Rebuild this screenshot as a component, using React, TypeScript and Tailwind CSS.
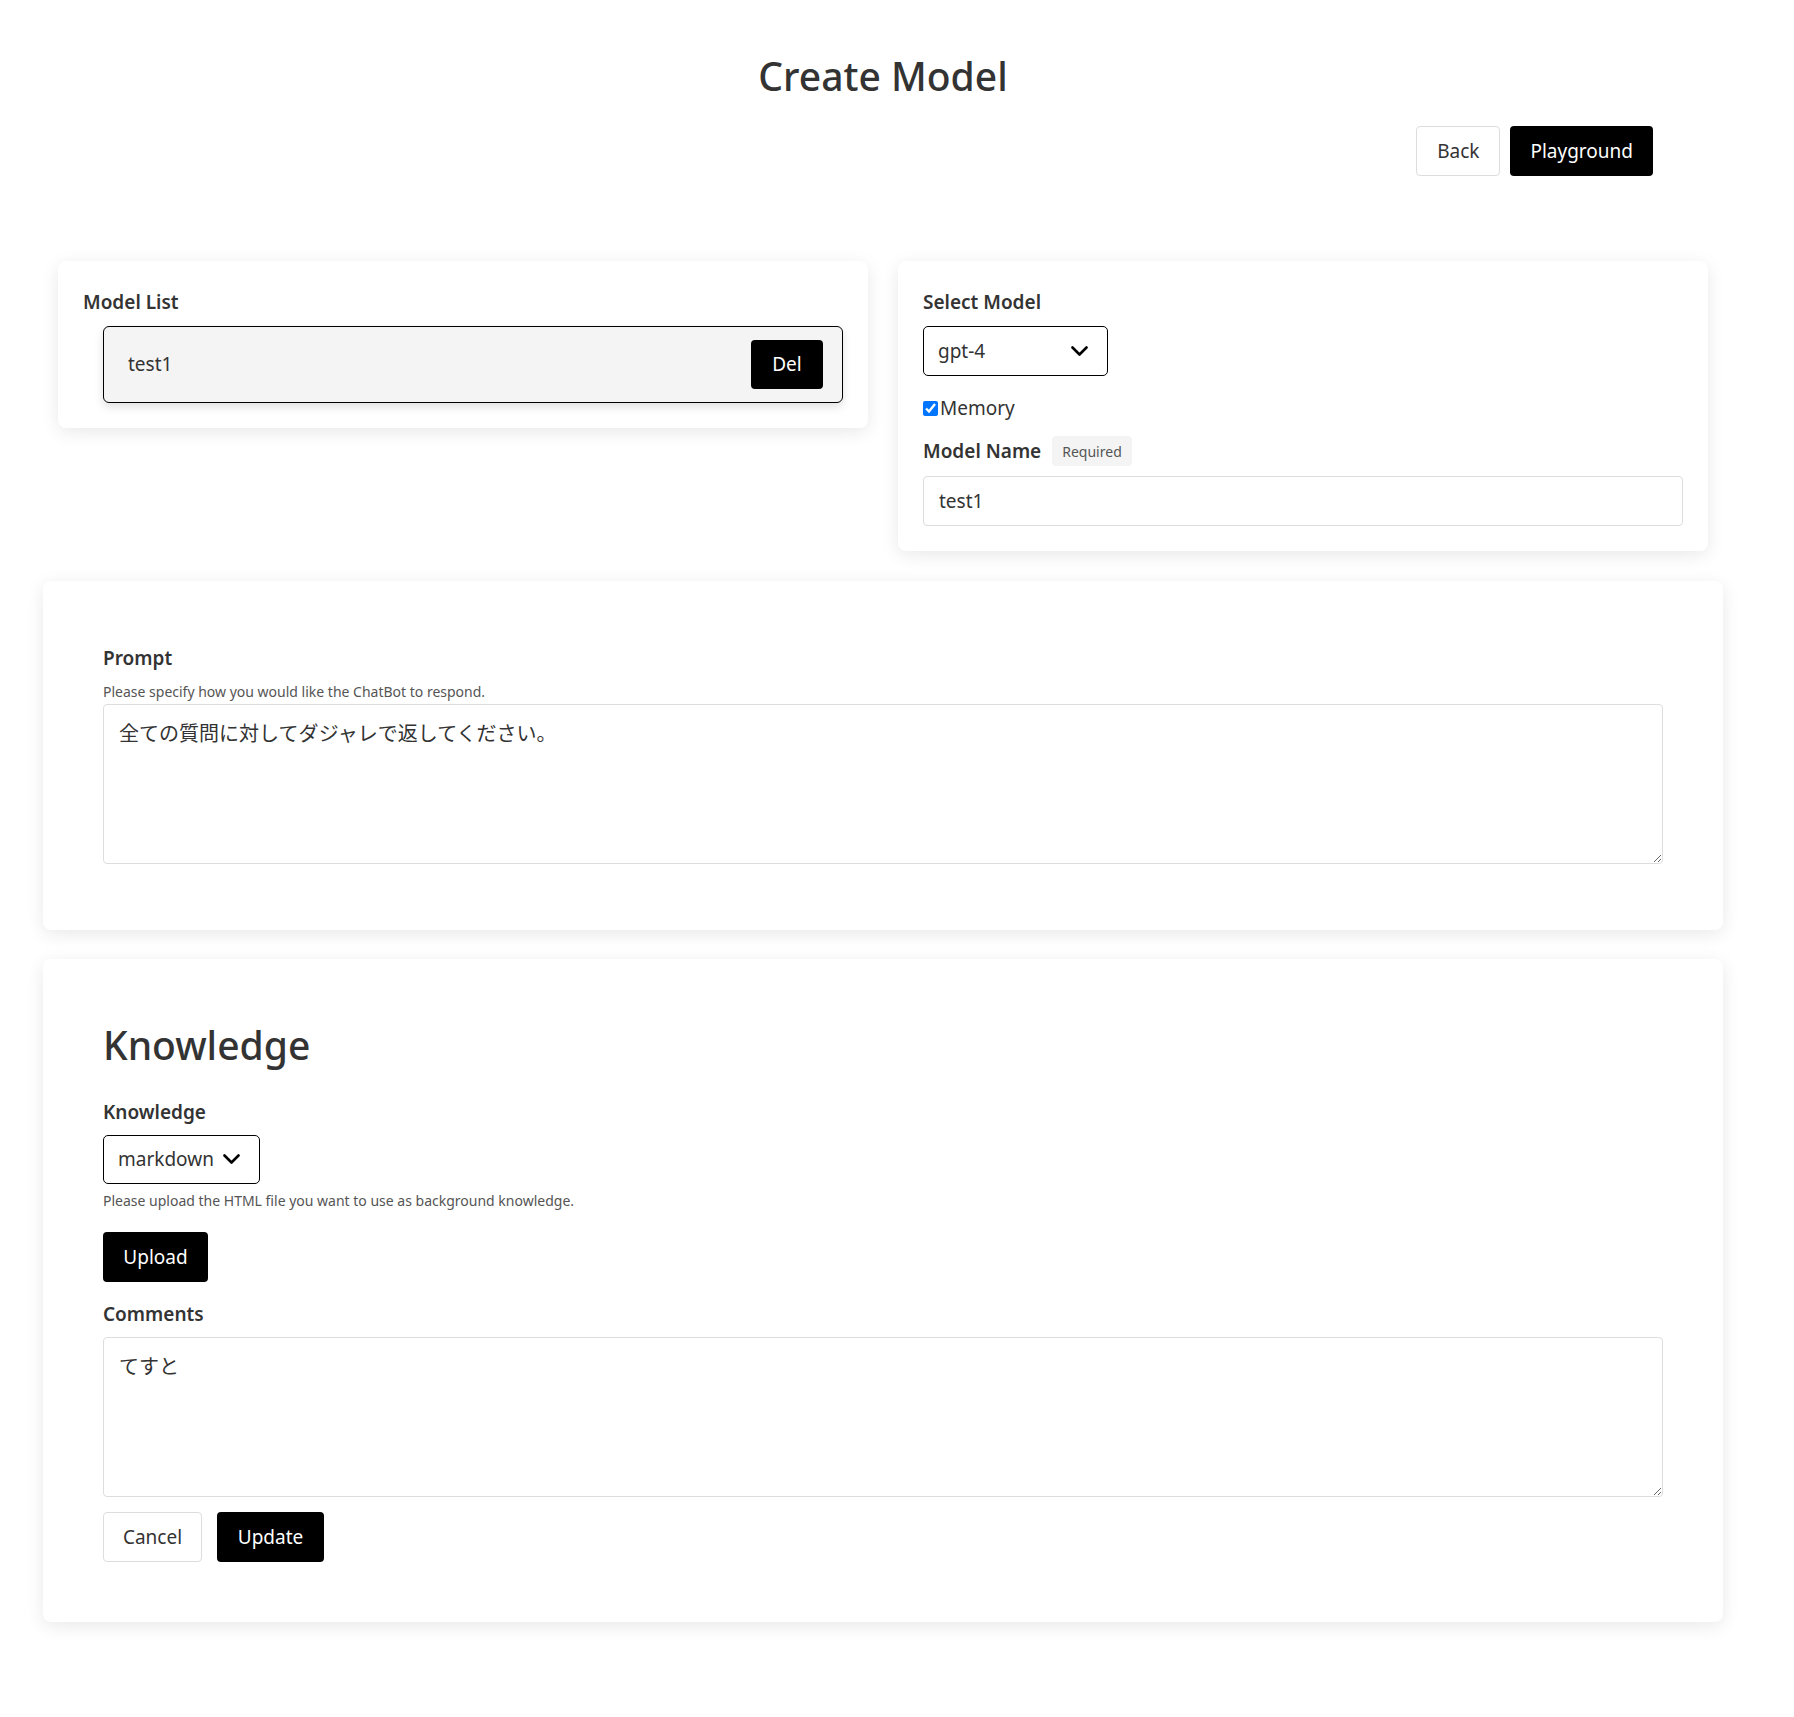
import { useState } from "react"

function Chevron() {
  return (
    <svg width="17" height="11" viewBox="0 0 17 11" fill="none" className="shrink-0">
      <path d="M1.5 1.5 8.5 8.5 15.5 1.5" stroke="#000" strokeWidth="2.6" strokeLinecap="round" strokeLinejoin="round" />
    </svg>
  )
}

function FakeSelect({ value, className }: { value: string; className: string }) {
  return (
    <div
      className={`flex items-center justify-between rounded-[5px] border border-black bg-white pl-[14px] pr-[19px] text-[19px] text-[#333] ${className}`}
    >
      <span>{value}</span>
      <Chevron />
    </div>
  )
}

function Label({ children }: { children: React.ReactNode }) {
  return <div className="text-[19px] font-semibold leading-[30px] text-[#333]">{children}</div>
}

export default function App() {
  const [memory, setMemory] = useState(true)

  return (
    <div
      className="min-h-screen bg-white text-[#333]"
      style={{ fontFamily: '"Noto Sans", "Noto Sans CJK JP", sans-serif' }}
    >
      <div className="w-[1766px] pb-[96px]">
        <div className="mx-auto w-[1680px]">
          <h1 className="pt-[48px] text-center text-[39px] font-medium leading-[56px] text-[#333]">Create Model</h1>

          <div className="mt-[22px] flex justify-end gap-[10px] pr-[70px]">
            <button className="h-[50px] rounded-[4px] border border-[#ddd] bg-white px-[20px] text-[19px] text-[#333]">
              Back
            </button>
            <button className="h-[50px] rounded-[4px] bg-black px-[20px] text-[19px] text-white">Playground</button>
          </div>

          <div className="mt-[85px] grid grid-cols-2 items-start gap-[30px] px-[15px]">
            <section className="rounded-[8px] bg-white px-[25px] pb-[25px] pt-[26px] shadow-[0_4px_18px_rgba(0,0,0,0.09)]">
              <Label>Model List</Label>
              <ul className="mt-[9px] pl-[20px]">
                <li className="flex h-[77px] items-center justify-between rounded-[6px] border border-black bg-[#f4f4f4] pl-[24px] pr-[19px] shadow-[0_4px_10px_rgba(0,0,0,0.12)]">
                  <span className="text-[19px] text-[#333]">test1</span>
                  <button className="h-[49px] w-[72px] rounded-[4px] bg-black text-[19px] text-white">Del</button>
                </li>
              </ul>
            </section>

            <section className="rounded-[8px] bg-white px-[25px] pb-[25px] pt-[26px] shadow-[0_4px_18px_rgba(0,0,0,0.09)]">
              <Label>Select Model</Label>
              <FakeSelect value="gpt-4" className="mt-[9px] h-[50px] w-[185px]" />
              <label className="mt-[20px] flex h-[24px] items-center text-[19px] text-[#333]">
                <input
                  type="checkbox"
                  checked={memory}
                  onChange={(e) => setMemory(e.target.checked)}
                  className="m-0 mr-[2px] h-[15px] w-[15px] accent-[#0075ff]"
                />
                Memory
              </label>
              <div className="mt-[16px] flex items-center gap-[11px]">
                <Label>Model Name</Label>
                <span className="flex h-[30px] items-center rounded-[4px] bg-[#f4f4f4] px-[10px] text-[14px] text-[#555]">
                  Required
                </span>
              </div>
              <input
                defaultValue="test1"
                className="mt-[10px] h-[50px] w-full rounded-[4px] border border-[#ddd] px-[15px] text-[19px] text-[#333] outline-none"
              />
            </section>
          </div>

          <section className="mt-[30px] rounded-[8px] bg-white px-[60px] pb-[66px] pt-[62px] shadow-[0_4px_18px_rgba(0,0,0,0.09)]">
            <Label>Prompt</Label>
            <p className="mt-[9px] text-[14px] leading-[20px] text-[#555]">
              Please specify how you would like the ChatBot to respond.
            </p>
            <textarea
              defaultValue="全ての質問に対してダジャレで返してください。"
              className="mt-[2px] block h-[160px] w-full rounded-[4px] border border-[#ddd] px-[15px] py-[14px] text-[20px] leading-[30px] text-[#333] outline-none"
            />
          </section>

          <section className="mt-[29px] rounded-[8px] bg-white px-[60px] pb-[60px] pt-[62px] shadow-[0_4px_18px_rgba(0,0,0,0.09)]">
            <h2 className="text-[39px] font-medium leading-[48px] text-[#333]">Knowledge</h2>
            <div className="mt-[28px]">
              <Label>Knowledge</Label>
            </div>
            <FakeSelect value="markdown" className="mt-[8px] h-[49px] w-[157px]" />
            <p className="mt-[7px] text-[14px] leading-[20px] text-[#555]">
              Please upload the HTML file you want to use as background knowledge.
            </p>
            <button className="mt-[21px] h-[50px] w-[105px] rounded-[4px] bg-black text-[19px] text-white">Upload</button>
            <div className="mt-[17px]">
              <Label>Comments</Label>
            </div>
            <textarea
              defaultValue="てすと"
              className="mt-[8px] block h-[160px] w-full rounded-[4px] border border-[#ddd] px-[15px] py-[14px] text-[20px] leading-[30px] text-[#333] outline-none"
            />
            <div className="mt-[15px] flex gap-[15px]">
              <button className="h-[50px] w-[99px] rounded-[4px] border border-[#ddd] bg-white text-[19px] text-[#333]">
                Cancel
              </button>
              <button className="h-[50px] w-[107px] rounded-[4px] bg-black text-[19px] text-white">Update</button>
            </div>
          </section>
        </div>
      </div>
    </div>
  )
}
